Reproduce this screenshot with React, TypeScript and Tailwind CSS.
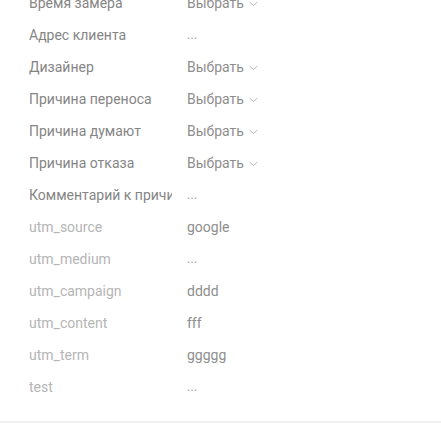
import React from 'react';

type Row = { label: string; value: string; muted?: boolean; select?: boolean };

const rows: Row[] = [
  { label: 'Время замера', value: 'Выбрать', select: true },
  { label: 'Адрес клиента', value: '...' },
  { label: 'Дизайнер', value: 'Выбрать', select: true },
  { label: 'Причина переноса', value: 'Выбрать', select: true },
  { label: 'Причина думают', value: 'Выбрать', select: true },
  { label: 'Причина отказа', value: 'Выбрать', select: true },
  { label: 'Комментарий к причине', value: '...' },
  { label: 'utm_source', value: 'google', muted: true },
  { label: 'utm_medium', value: '...', muted: true },
  { label: 'utm_campaign', value: 'dddd', muted: true },
  { label: 'utm_content', value: 'fff', muted: true },
  { label: 'utm_term', value: 'ggggg', muted: true },
  { label: 'test', value: '...', muted: true },
];

const Chevron = () => (
  <svg width="9" height="6" viewBox="0 0 9 6" className="ml-[5px] mt-[1px]">
    <path d="M0.5 0.8 L4.5 4.8 L8.5 0.8" fill="none" stroke="#b5b5b5" strokeWidth="1" />
  </svg>
);

const FieldRow = ({ row }: { row: Row }) => (
  <div className="flex items-center h-8">
    <div
      className={`w-[143px] shrink-0 overflow-hidden whitespace-nowrap ${
        row.muted ? 'text-[#b5b5b5]' : 'text-[#858585]'
      }`}
    >
      {row.label}
    </div>
    <div className="ml-[15px] flex items-center">
      {row.value === '...' ? (
        <span className="text-[13px] text-[#a8a8a8]">...</span>
      ) : (
        <span className="text-[#8e8e8e]">{row.value}</span>
      )}
      {row.select && <Chevron />}
    </div>
  </div>
);

const App = () => {
  return (
    <div className="w-[441px] h-[424px] overflow-hidden bg-white font-['Roboto',sans-serif] text-[14px]">
      <div className="pl-[29px] -mt-[13px] pb-[18px]">
        {rows.map((r) => (
          <FieldRow key={r.label} row={r} />
        ))}
      </div>
      <div className="h-[2px] bg-[#f0f0f0]" />
    </div>
  );
};

export default App;
